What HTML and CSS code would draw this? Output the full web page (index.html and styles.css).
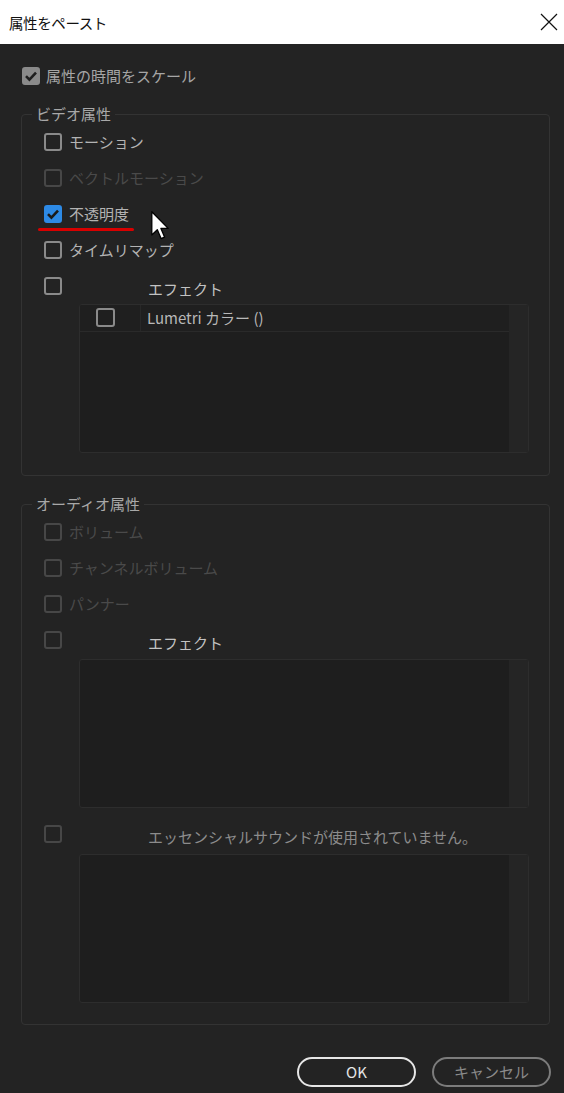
FILE: index.html
```html
<!DOCTYPE html>
<html lang="ja">
<head>
<meta charset="utf-8">
<title>属性をペースト</title>
<link rel="stylesheet" href="styles.css">
</head>
<body>
<div class="titlebar">
  <span class="title">属性をペースト</span>
  <svg class="close" width="18" height="18" viewBox="0 0 18 18"><path d="M1 1 L17 17 M17 1 L1 17" stroke="#111" stroke-width="1.2" fill="none"/></svg>
</div>
<div class="content">
  <div class="row scale">
    <span class="cb cb-gray"><svg width="18" height="18" viewBox="0 0 18 18"><path d="M4 9.2 L7.4 12.6 L14 5.6" stroke="#1f1f1f" stroke-width="2.6" fill="none"/></svg></span>
    <span class="lbl lbl-scale">属性の時間をスケール</span>
  </div>

  <fieldset class="group">
    <legend>ビデオ属性</legend>
    <div class="inner">
      <div class="row opt"><span class="cb"></span><span class="lbl">モーション</span></div>
      <div class="row opt dis"><span class="cb"></span><span class="lbl">ベクトルモーション</span></div>
      <div class="row opt"><span class="cb cb-blue"><svg width="18" height="18" viewBox="0 0 18 18"><path d="M4 9.2 L7.4 12.6 L14 5.6" stroke="#1b1b1b" stroke-width="2.6" fill="none"/></svg></span><span class="lbl">不透明度</span></div>
      <div class="row opt"><span class="cb"></span><span class="lbl">タイムリマップ</span></div>
      <div class="row opt head"><span class="cb"></span><span class="head-lbl">エフェクト</span></div>
      <div class="listbox">
        <div class="lb-main">
          <div class="lb-row">
            <div class="lb-cell-cb"><span class="cb"></span></div>
            <div class="lb-cell-txt">Lumetri カラー ()</div>
          </div>
        </div>
        <div class="lb-scroll"></div>
      </div>
    </div>
  </fieldset>

  <fieldset class="group audio">
    <legend>オーディオ属性</legend>
    <div class="inner">
      <div class="row opt dis"><span class="cb"></span><span class="lbl">ボリューム</span></div>
      <div class="row opt dis"><span class="cb"></span><span class="lbl">チャンネルボリューム</span></div>
      <div class="row opt dis"><span class="cb"></span><span class="lbl">パンナー</span></div>
      <div class="row opt head"><span class="cb dis-cb"></span><span class="head-lbl">エフェクト</span></div>
      <div class="listbox lb-a1">
        <div class="lb-main"></div>
        <div class="lb-scroll"></div>
      </div>
      <div class="row opt head ess"><span class="cb dis-cb"></span><span class="head-lbl gray">エッセンシャルサウンドが使用されていません。</span></div>
      <div class="listbox lb-a2">
        <div class="lb-main"></div>
        <div class="lb-scroll"></div>
      </div>
    </div>
  </fieldset>

  <div class="buttons">
    <button class="btn ok">OK</button>
    <button class="btn cancel">キャンセル</button>
  </div>
</div>

<div class="annot-line"></div>
<svg class="cursor" width="19" height="29" viewBox="0 0 13 20"><path d="M0.5 0.5 L0.5 16.5 L4.3 12.9 L6.9 19 L9.3 18 L6.8 12 L11.8 12 Z" fill="#fff" stroke="#000" stroke-width="0.9" stroke-linejoin="round"/></svg>
</body>
</html>
```

FILE: styles.css
```css
html, body {
  margin: 0;
  padding: 0;
}
body {
  width: 564px;
  height: 1093px;
  background: #232323;
  font-family: "Noto Sans CJK JP", "Noto Sans", sans-serif;
  position: relative;
  overflow: hidden;
}
.titlebar {
  height: 44px;
  background: #ffffff;
  display: flex;
  align-items: center;
  justify-content: space-between;
  padding: 0 6px 0 9px;
  box-sizing: border-box;
}
.title {
  font-size: 14.5px;
  color: #111;
  letter-spacing: -0.4px;
}
.close {
  display: block;
}
.content {
  padding: 22px 0 0 21px;
}
.row {
  display: flex;
  align-items: center;
  gap: 7px;
}
.scale {
  height: 20px;
  padding-left: 1px;
  gap: 6px;
}
.cb {
  display: block;
  width: 18px;
  height: 18px;
  box-sizing: border-box;
  border: 2px solid #8a8a8a;
  border-radius: 3px;
  flex: none;
  position: relative;
}
.cb svg {
  position: absolute;
  left: -2px;
  top: -2px;
}
.cb-gray {
  background: #8a8a8a;
  border-color: #8a8a8a;
}
.cb-blue {
  background: #2d8ae6;
  border-color: #2d8ae6;
}
.lbl {
  font-size: 15px;
  line-height: 20px;
  color: #b3b3b3;
}
.lbl-scale {
  color: #a6a6a6;
}
.dis .cb, .dis-cb {
  border-color: #474747;
}
.dis .lbl {
  color: #4a4a4a;
}
.group {
  margin: 18px 0 0 0;
  padding: 0 0 22px 0;
  width: 529px;
  box-sizing: border-box;
  border: 1px solid #333333;
  border-radius: 4px;
  min-width: 0;
}
.group.audio {
  margin-top: 18px;
  padding-bottom: 21px;
}
.group legend {
  margin-left: 10px;
  padding: 0 4px;
  font-size: 15px;
  line-height: 20px;
  color: #a8a8a8;
}
.inner {
  padding-left: 22px;
}
.opt {
  height: 36px;
}
.head-lbl {
  margin-left: 79px;
  padding-top: 6px;
  font-size: 15px;
  line-height: 20px;
  color: #c2c2c2;
}
.head-lbl.gray {
  color: #8c8c8c;
}
.listbox {
  margin-left: 35px;
  width: 450px;
  height: 149px;
  box-sizing: border-box;
  border: 1px solid #2d2d2d;
  border-radius: 3px;
  background: #1e1e1e;
  display: flex;
  overflow: hidden;
}
.lb-a1 {
  margin-top: 1px;
}
.ess {
  margin-top: 8px;
}
.lb-a2 {
  margin-top: 2px;
}
.lb-main {
  flex: 1;
}
.lb-scroll {
  width: 19px;
  background: #252525;
}
.lb-row {
  display: flex;
  height: 26px;
  border-bottom: 1px solid #2a2a2a;
  background: #1f1f1f;
}
.lb-cell-cb {
  width: 61px;
  border-right: 1px solid #282828;
  padding: 3px 0 0 16px;
  box-sizing: border-box;
}
.lb-cell-cb .cb {
  width: 19px;
  height: 19px;
}
.lb-cell-txt {
  padding-left: 6px;
  font-size: 15px;
  line-height: 26px;
  color: #b8b8b8;
}
.buttons {
  display: flex;
  justify-content: flex-end;
  gap: 16px;
  margin-top: 32px;
  padding-right: 13px;
}
.btn {
  width: 119px;
  height: 30px;
  border-radius: 15px;
  background: transparent;
  font-family: "Noto Sans CJK JP", "Noto Sans", sans-serif;
  font-size: 15px;
  line-height: 20px;
  padding: 0;
  box-sizing: border-box;
}
.ok {
  border: 2px solid #e6e6e6;
  color: #e6e6e6;
}
.cancel {
  border: 2px solid #7c7c7c;
  color: #8a8a8a;
}
.annot-line {
  position: absolute;
  left: 38px;
  top: 228px;
  width: 96px;
  height: 3px;
  border-radius: 2px;
  background: #d80000;
}
.cursor {
  position: absolute;
  left: 151px;
  top: 211px;
}
```
